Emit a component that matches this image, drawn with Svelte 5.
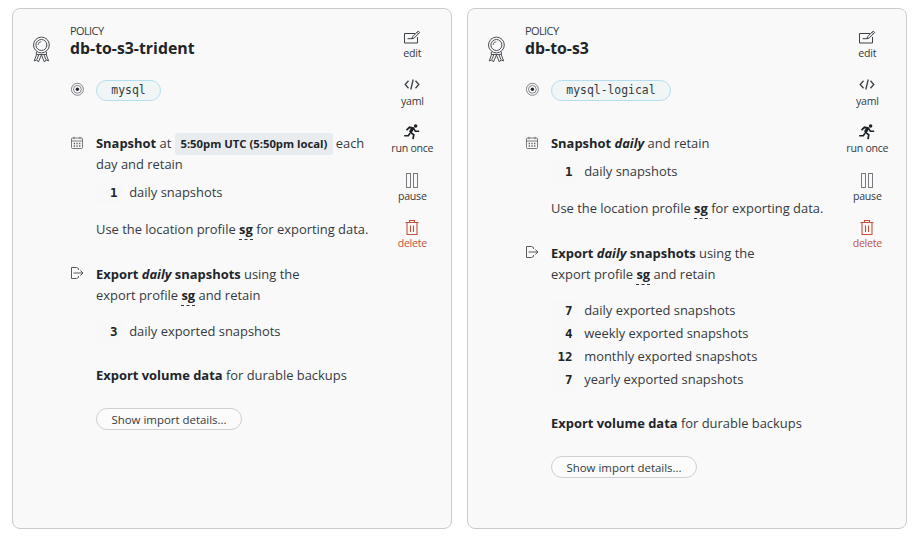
<script>
  const policies = [
    { name: 'db-to-s3-trident', app: 'mysql', time: '5:50pm UTC (5:50pm local)', exports: [[3, 'daily']] },
    { name: 'db-to-s3', app: 'mysql-logical', time: null, exports: [[7, 'daily'], [4, 'weekly'], [12, 'monthly'], [7, 'yearly']] }
  ];
  const actions = ['edit', 'yaml', 'run once', 'pause', 'delete'];
</script>

{#snippet count(n, label)}
  <div class="count"><span class="num">{n}</span><span>{label}</span></div>
{/snippet}

<main>
  {#each policies as p}
    <section class="card">
      <svg class="ribbon" width="18" height="28" viewBox="0 0 18 28" fill="none" stroke="#4b5055" stroke-width="1">
        <circle cx="9.4" cy="9" r="7.9" /><circle cx="9.4" cy="9" r="5.5" />
        <path d="M6.1 9a3.3 3.3 0 0 1 3.3-3.3" stroke-width=".8" />
        <path d="M4.4 16v3L2.2 25l2.6-1.2 1.6 2.2 3-7 3 7 1.6-2.2 2.6 1.2-2.2-6v-3M4.9 18.5h9M6.9 18.5l-2 5M11.9 18.5l2 5" />
      </svg>
      <div class="body">
        <header>
          <div class="kind">POLICY</div>
          <h2>{p.name}</h2>
        </header>

        <div class="row app">
          <svg width="14" height="14" viewBox="0 0 14 14" fill="none" stroke="#666b70" stroke-width=".8">
            <circle cx="7.4" cy="7.3" r="6" /><circle cx="7.4" cy="7.3" r="3.9" /><circle cx="7.4" cy="7.3" r="1.7" fill="#24282c" stroke="none" />
          </svg>
          <span class="pill">{p.app}</span>
        </div>

        <div class="row snap">
          <svg width="14" height="14" viewBox="0 0 14 14" fill="none" stroke="#555a5f" stroke-width=".8">
            <rect x="1.5" y="2" width="11" height="10.5" rx="1" />
            <path d="M1.5 5h11M4 .8v2.4M10 .8v2.4" />
            <path d="M3.7 7.5h7M3.7 10h7" stroke-width="1.3" stroke-dasharray="1.3 1.4" />
          </svg>
          <div>
            {#if p.time}
              <p class="text timed"><b>Snapshot</b> at <span class="time">{p.time}</span> each<br />day and retain</p>
            {:else}
              <p class="text"><b>Snapshot <i>daily</i></b> and retain</p>
            {/if}
            <div class="counts first">{@render count(1, 'daily snapshots')}</div>
            <p class="text profile">Use the location profile <b class="ref">sg</b> for exporting data.</p>
          </div>
        </div>

        <div class="row export">
          <svg width="14" height="14" viewBox="0 0 14 14" fill="none" stroke="#43484d" stroke-width=".9">
            <path d="M8.5 4V2.5L6.5 1.5h-5v11h5l2-1V10M3.5 7H13M10.3 4.5 13 7l-2.7 2.5" />
          </svg>
          <div>
            <p class="text"><b>Export <i>daily</i> snapshots</b> using the<br />export profile <b class="ref">sg</b> and retain</p>
            <div class="counts second">
              {#each p.exports as [n, period]}{@render count(n, `${period} exported snapshots`)}{/each}
            </div>
            <p class="text volume"><b>Export volume data</b> for durable backups</p>
            <button>Show import details...</button>
          </div>
        </div>
      </div>

      <nav>
        {#each actions as a}
          <div class="action" class:danger={a === 'delete'}>
            <svg width="18" height="18" viewBox="0 0 18 18" fill="none" stroke="#3c4146" stroke-width="1">
              {#if a === 'edit'}
                <path d="M12 5.5H1.5v9.5h13V9" /><path d="M9 10.7l.6-2L15.2 3.1l1.5 1.4-5.6 5.6zM4.5 10.7H9M14 4.3l1.5 1.5" />
              {:else if a === 'yaml'}
                <path d="M5.5 4.8 2.2 8.5l3.3 3.7M12.5 4.8 15.8 8.5l-3.3 3.7M10.2 3.5 7.8 13.5" stroke-width="1.3" />
              {:else if a === 'run once'}
                <circle cx="12.6" cy="3" r="1.8" fill="#1d2125" stroke="none" />
                <path d="M3.5 7.2 6.5 4.3l3.7.8-2.6 4.4 3.2 2.3-.8 4.4" stroke="#1d2125" stroke-width="1.7" />
                <path d="M10 4.5 7.3 9.3" stroke="#1d2125" stroke-width="3" />
                <path d="M10.5 5.5l1.9 2.7h3.8M7 10.3l-1.7 2.4H1.2" stroke="#1d2125" stroke-width="1.6" />
              {:else if a === 'pause'}
                <rect x="3.5" y="2.5" width="4" height="14" stroke="#777b7f" /><rect x="10.5" y="2.5" width="4" height="14" stroke="#777b7f" />
              {:else}
                <path d="M2.5 4.5h13M4 4.5v12h10v-12M6.5 4.5v-2h5v2M7.5 7.5v6.5M10.5 7.5v6.5" stroke="#c4513f" stroke-width="1.1" />
              {/if}
            </svg>
            <span>{a}</span>
          </div>
        {/each}
      </nav>
    </section>
  {/each}
</main>

<style>
  :global(body) { background: #fff; }
  main {
    display: flex; gap: 15px; padding: 8px 12px; height: 539px; box-sizing: border-box;
    font: 12.93px/20.7px "Open Sans", "Noto Sans", sans-serif; color: #343a40;
  }
  .card {
    display: flex; width: 440px; height: 521px; box-sizing: border-box; flex: none;
    border: 1px solid #c9cbcc; border-radius: 8px; background: #f9f9f9;
  }
  .ribbon { margin: 27px 0 0 19px; flex: none; }
  .body { margin-left: 20px; width: 310px; flex: none; }
  header { padding-top: 14px; height: 57px; box-sizing: border-box; }
  .kind { font-size: 11px; line-height: 16px; letter-spacing: -.6px; }
  h2 { margin: 0; font-size: 15.85px; line-height: 19px; color: #212529; }
  .row { display: flex; gap: 12px; }
  .row > svg { flex: none; }
  .row > div { width: 284px; white-space: nowrap; }
  .app { height: 67px; padding-top: 14px; box-sizing: border-box; }
  .app svg { margin-top: 2px; }
  .pill {
    box-sizing: border-box; height: 21px; padding: 0 14.3px; border: 1px solid #b3def0; border-radius: 11px;
    background: #f0f5f5; font: 11.42px/18px "DejaVu Sans Mono", monospace;
  }
  .snap svg { margin-top: 3px; }
  .export svg { margin-top: 2px; }
  .text { margin: 0; }
  b { color: #212529; }
  .time {
    display: inline-block; height: 22px; line-height: 22px; margin: 0 -1px -1px .8px; padding: 0 6px 0 5px; border-radius: 3px;
    background: #e9ecef; color: #212529; font-size: 11.3px; font-weight: 700; vertical-align: top;
  }
  .ref { border-bottom: 1px dashed #343a40; padding-bottom: 1px; }
  .counts { display: flex; flex-direction: column; gap: 2px; }
  .first { margin-top: 7px; }
  .second { margin-top: 15.6px; }
  .count { display: flex; gap: 5.2px; height: 21px; line-height: 21px; }
  .num {
    width: 21.5px; padding-right: 6.5px; text-align: right; background: #f8f8f8; border-radius: 2px;
    font-family: "DejaVu Sans Mono", monospace; font-size: 12.5px; font-weight: 700; color: #212529;
  }
  .profile { margin-top: 16.3px; }
  .export { margin-top: 24.2px; }
  .volume { margin-top: 23.1px; }
  button {
    display: block; margin-top: 22.4px; width: 146px; height: 22px; padding: 0; border: 1px solid #ced0d2;
    border-radius: 11px; background: #fbfbfb; font: 11.45px/19px "Open Sans", "Noto Sans", sans-serif; color: #343a40;
  }
  nav { display: flex; flex-direction: column; margin: 19px 0 0 -6.4px; width: 80px; }
  .action { display: flex; flex-direction: column; align-items: center; height: 47.5px; font-size: 10.6px; line-height: 14px; letter-spacing: -.25px; white-space: nowrap; }
  .danger { color: #c4513f; }
</style>
